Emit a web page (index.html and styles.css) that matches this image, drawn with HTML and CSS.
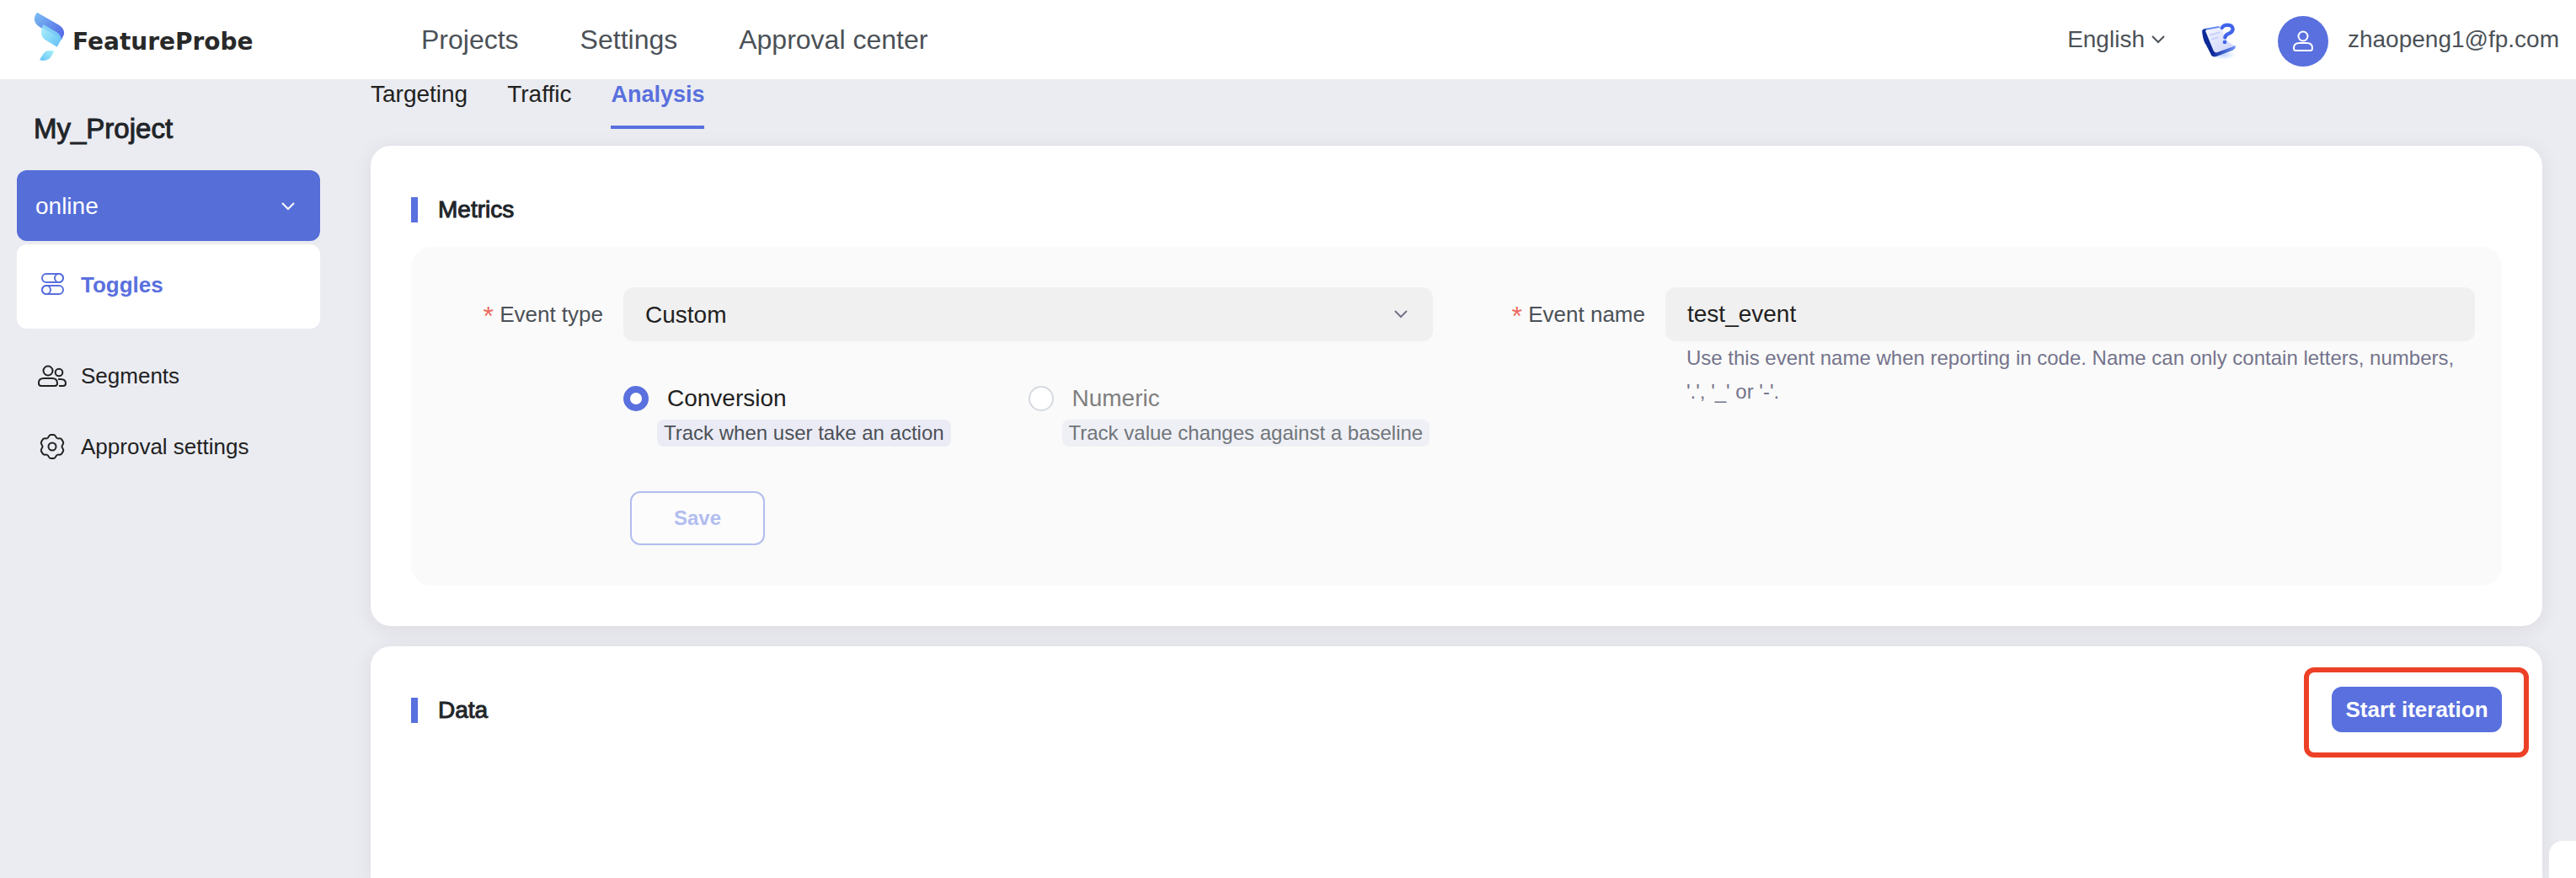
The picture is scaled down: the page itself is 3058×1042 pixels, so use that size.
FILE: index.html
```html
<!DOCTYPE html>
<html lang="en">
<head>
<meta charset="utf-8">
<meta name="viewport" content="width=device-width, initial-scale=1">
<title>FeatureProbe</title>
<link rel="stylesheet" href="styles.css">
</head>
<body>
<header class="header">
  <a class="brand" href="#">
    <svg class="brand-mark" viewBox="120 40 112 178" aria-hidden="true">
      <defs>
        <linearGradient id="g1" x1="0" y1="0" x2="1" y2="1"><stop offset="0" stop-color="#7cc0f3"/><stop offset="1" stop-color="#4f5fe4"/></linearGradient>
        <linearGradient id="g2" x1="0" y1="0" x2="1" y2="1"><stop offset="0" stop-color="#b0f3fa"/><stop offset="1" stop-color="#62bdf8"/></linearGradient>
        <linearGradient id="g3" x1="1" y1="0" x2="0" y2="1"><stop offset="0" stop-color="#a8f2f8"/><stop offset="1" stop-color="#68c3f9"/></linearGradient>
      </defs>
      <path fill="url(#g1)" d="M132 42 210 87Q234 103 228 122L220 140 142 95Q114 76 126 52Z"/>
      <path fill="url(#g2)" d="M155 86 204 114Q218 124 220 137L204 166 164 142Q147 132 147 112 147 97 155 86Z"/>
      <path fill="#6cb8f4" opacity=".45" d="M150 97 206 128Q215 134 218 140L220 136Q217 124 204 114L155 86Z"/>
      <path fill="url(#g3)" d="M194 181Q176 176 163 182 155 188 141 212 152 217 164 214 174 212 181 203Z"/>
    </svg>
    <span class="brand-name">FeatureProbe</span>
  </a>
  <nav class="nav">
    <a href="#">Projects</a>
    <a href="#">Settings</a>
    <a href="#">Approval center</a>
  </nav>
  <div class="tools">
    <button class="language" type="button">English
      <svg class="chevron" viewBox="0 0 16 10" aria-hidden="true"><path d="M1 1l7 7 7-7"/></svg>
    </button>
    <a class="docs" href="#" aria-label="Documentation">
      <svg viewBox="30 30 132 138" aria-hidden="true">
        <defs>
          <linearGradient id="d1" x1="0" y1="0" x2="1" y2="1"><stop offset="0" stop-color="#f4f6ff"/><stop offset="1" stop-color="#c9d2fb"/></linearGradient>
          <linearGradient id="d2" x1="0" y1="0" x2="1" y2="0"><stop offset="0" stop-color="#0d2a9a"/><stop offset="1" stop-color="#6f92f8"/></linearGradient>
          <radialGradient id="d3"><stop offset="0" stop-color="#bcd4ff"/><stop offset="1" stop-color="#bcd4ff" stop-opacity="0"/></radialGradient>
        </defs>
        <ellipse cx="112" cy="150" rx="48" ry="17" fill="url(#d3)"/>
        <path fill="#5d82f2" d="M38 66Q40 58 52 56L100 48 104 58 58 70 62 110 50 112Z"/>
        <path fill="#0e2a96" d="M42 60 54 58 88 144 84 157Q76 157 72 151L46 100Q38 76 42 60Z"/>
        <path fill="url(#d2)" d="M84 142 158 117Q160 128 148 134L92 155Q80 159 74 153Z"/>
        <path fill="url(#d1)" d="M52 62 108 52Q112 52 112 60 118 88 132 102T158 118L92 142Q84 144 80 136L54 72Q50 64 52 62Z"/>
        <path fill="none" stroke="#c9d3fb" stroke-width="6" d="M66 80 104 70M72 95 97 88"/>
        <path fill="none" stroke="#4164ea" stroke-width="13" stroke-linecap="round" d="M110 54Q116 44 130 44 148 45 149 58 149 68 138 73 124 78 121 88"/>
        <circle cx="120" cy="105" r="7" fill="#4164ea"/>
      </svg>
    </a>
    <a class="account" href="#">
      <span class="avatar">
        <svg viewBox="0 0 26 26" aria-hidden="true"><circle cx="13" cy="7" r="5.500"/><path d="M2 21Q2 15 9 15H17Q24 15 24 21 24 24 22 24H4Q2 24 2 21Z"/></svg>
      </span>
      zhaopeng1@fp.com
    </a>
  </div>
</header>

<div class="layout">
  <aside class="sidebar">
    <h1 class="project">My_Project</h1>
    <button class="environment" type="button">online
      <svg class="chevron" viewBox="0 0 16 10" aria-hidden="true"><path d="M1 1l7 7 7-7"/></svg>
    </button>
    <nav class="menu">
      <a class="menu-item menu-item-active" href="#">
        <svg viewBox="-18 -18 36 36" aria-hidden="true"><rect x="-12" y="-13" width="25" height="10" rx="5"/><rect x="3" y="-13" width="10" height="10" rx="5"/><rect x="-12" y="1" width="25" height="10" rx="5"/><rect x="-12" y="1" width="10" height="10" rx="5"/></svg>
        Toggles
      </a>
      <a class="menu-item" href="#">
        <svg viewBox="-18 -18 36 36" aria-hidden="true"><circle cx="-5" cy="-6" r="5.500"/><path d="M-16 8Q-16 3-10 3H0Q6 3 6 9 6 12 3 12H-13Q-16 12-16 9Z"/><circle cx="8" cy="-4" r="4.300"/><path d="M7 4H10Q16 4 16 9 16 12 13 12H8"/></svg>
        Segments
      </a>
      <a class="menu-item" href="#">
        <svg viewBox="-18 -18 36 36" aria-hidden="true">
          <defs><path id="tooth" d="M-5.750-9.960C-4-11-4.200-14-1.800-14H1.800C4.200-14 4-11 5.750-9.960"/></defs>
          <use href="#tooth"/><use href="#tooth" transform="rotate(60)"/><use href="#tooth" transform="rotate(120)"/><use href="#tooth" transform="rotate(180)"/><use href="#tooth" transform="rotate(240)"/><use href="#tooth" transform="rotate(300)"/>
          <circle r="4.500"/>
        </svg>
        Approval settings
      </a>
    </nav>
  </aside>

  <main class="main">
    <nav class="tabs">
      <a class="tab" href="#">Targeting</a>
      <a class="tab" href="#">Traffic</a>
      <a class="tab tab-active" href="#">Analysis</a>
    </nav>

    <section class="card">
      <h2 class="card-title">Metrics</h2>
      <form class="metrics">
        <label class="field-label" for="event-type"><span class="required">*</span> Event type</label>
        <div class="select">
          <select id="event-type"><option>Custom</option></select>
          <svg class="chevron" viewBox="0 0 16 10" aria-hidden="true"><path d="M1 1l7 7 7-7"/></svg>
        </div>
        <label class="field-label" for="event-name"><span class="required">*</span> Event name</label>
        <div class="name-field">
          <input class="text-input" id="event-name" type="text" value="test_event">
          <p class="hint">Use this event name when reporting in code. Name can only contain letters, numbers, '.', '_' or '-'.</p>
        </div>
        <div class="options">
          <label class="option">
            <input type="radio" name="kind" checked>
            <span class="option-name">Conversion</span>
            <span class="option-note">Track when user take an action</span>
          </label>
          <label class="option option-muted">
            <input type="radio" name="kind" disabled>
            <span class="option-name">Numeric</span>
            <span class="option-note">Track value changes against a baseline</span>
          </label>
        </div>
        <button class="save" type="button" disabled>Save</button>
      </form>
    </section>

    <section class="card card-data">
      <h2 class="card-title">Data</h2>
      <div class="highlight"><button class="start" type="button">Start iteration</button></div>
    </section>
  </main>
</div>
<div class="corner-widget"></div>
</body>
</html>
```

FILE: styles.css
```css
* { box-sizing: border-box; }

body {
  margin: 0;
  height: 100vh;
  overflow: hidden;
  display: flex;
  flex-direction: column;
  background: #ebecf1;
  color: #212529;
  font-family: "Liberation Sans", Arial, sans-serif;
  font-size: 28px;
}

a { color: inherit; text-decoration: none; }
button, input, select { font: inherit; color: inherit; margin: 0; }
button { border: 0; background: none; padding: 0; }
svg { display: block; fill: none; }

.chevron { width: 16px; height: 10px; stroke: currentColor; stroke-width: 2; flex: none; }

/* Header */
.header {
  display: flex;
  align-items: center;
  height: 94px;
  flex: none;
  padding: 0 20px 0 40px;
  background: #fff;
  color: #4b5157;
}
.brand { display: flex; align-items: center; gap: 9px; width: 460px; }
.brand-mark { width: 37px; height: 59px; margin-bottom: 8px; }
.brand-name { font: 700 28px/40px "DejaVu Sans", sans-serif; color: #292929; padding-top: 6px; }
.nav { display: flex; gap: 73px; font-size: 32px; }
.tools { display: flex; align-items: center; margin-left: auto; }
.language { display: flex; align-items: center; gap: 8px; }
.docs { margin: 2px 49px 0 41px; }
.docs svg { width: 44px; height: 46px; }
.account { display: flex; align-items: center; gap: 23px; }
.avatar {
  display: grid;
  place-items: center;
  width: 60px;
  height: 60px;
  margin-top: 4px;
  border-radius: 50%;
  background: #5970de;
}
.avatar svg { width: 26px; height: 26px; stroke: #fff; stroke-width: 2; }

/* Sidebar */
.layout { display: flex; flex: 1; min-height: 0; }
.sidebar { width: 400px; flex: none; padding: 39px 20px 0; }
.project {
  margin: 0 20px 29px;
  font-size: 33px;
  font-weight: 400;
  line-height: 40px;
  -webkit-text-stroke: 1px currentColor;
}
.environment {
  display: flex;
  align-items: center;
  justify-content: space-between;
  width: 100%;
  height: 84px;
  padding: 2px 30px 0 22px;
  border-radius: 12px;
  background: #556ed8;
  color: #fff;
}
.menu { font-size: 26px; color: #212121; }
.menu-item { display: flex; align-items: center; gap: 16px; height: 84px; padding-left: 24px; }
.menu-item svg { width: 36px; height: 36px; stroke: currentColor; stroke-width: 2; }
.menu-item-active {
  height: 100px;
  margin: 4px 0 14px;
  padding-bottom: 4px;
  border-radius: 12px;
  background: #fff;
  color: #5970de;
  font-weight: 700;
}

/* Main */
.main { display: flex; flex-direction: column; flex: 1; min-width: 0; padding: 2px 40px 0; }
.tabs { display: flex; gap: 47px; margin-bottom: 20px; line-height: 32px; color: #212121; }
.tab { padding-bottom: 21px; border-bottom: 4px solid transparent; }
.tab-active { color: #5970de; border-color: #5970de; font-size: 27px; font-weight: 700; }

.card {
  padding: 48px;
  border-radius: 24px;
  background: #fff;
  box-shadow: 0 4px 24px rgba(33, 20, 50, .08);
}
.card-title {
  display: flex;
  align-items: center;
  gap: 24px;
  height: 56px;
  margin: 0 0 16px;
  font-size: 28px;
  font-weight: 400;
  -webkit-text-stroke: 1px currentColor;
}
.card-title::before { content: ""; width: 8px; height: 30px; background: #5970de; }

.metrics {
  display: grid;
  grid-template-columns: 252px 1fr 276px 1fr;
  padding: 48px 32px 48px 0;
  border-radius: 24px;
  background: #fafafa;
}
.field-label { padding-right: 24px; text-align: right; font-size: 26px; line-height: 64px; color: #4b5157; }
.required { color: #ec6a5e; font-size: 32px; line-height: 32px; vertical-align: -4px; }
.select { display: grid; align-items: center; height: 64px; }
.select > * { grid-area: 1 / 1; }
.select select, .text-input {
  appearance: none;
  width: 100%;
  height: 64px;
  padding: 0 26px;
  border: 0;
  border-radius: 12px;
  background: #f0f0f0;
  color: #212121;
}
.select .chevron { justify-self: end; margin-right: 30px; color: #74748c; pointer-events: none; }
.name-field { grid-row: 1 / 3; grid-column: 4; }
.hint { margin: 0; padding: 0 16px 0 25px; font-size: 24px; line-height: 40px; color: #74748c; }

.options { grid-column: 2; display: grid; grid-template-columns: 1fr 1fr; margin-top: 48px; }
.option {
  display: grid;
  grid-template-columns: 30px 1fr;
  grid-template-rows: 40px 32px;
  gap: 5px 10px;
  align-items: center;
  justify-items: start;
}
.option input {
  appearance: none;
  width: 30px;
  height: 30px;
  border: 2px solid #d5dadf;
  border-radius: 50%;
  background: #fff;
}
.option input:checked { border: 8px solid #5970de; }
.option-name { padding-left: 12px; color: #212121; }
.option-note {
  grid-column: 2;
  padding: 0 8px;
  border-radius: 8px;
  background: #ebebf5;
  color: #4b5157;
  font-size: 24px;
  line-height: 32px;
  white-space: nowrap;
}
.option-muted .option-name { color: #7f7f7f; }
.option-muted .option-note { background: #eff0f5; color: #70757a; }
.save {
  grid-column: 2;
  width: 160px;
  height: 64px;
  margin: 53px 0 0 8px;
  border: 2px solid #b2bdef;
  border-radius: 12px;
  background: #fcfcfc;
  color: #b2bdef;
  font-size: 24px;
  font-weight: 700;
}

.card-data {
  display: flex;
  align-items: flex-start;
  justify-content: space-between;
  flex: 1;
  margin-top: 24px;
  padding: 25px 16px 0 48px;
  border-radius: 24px 24px 0 0;
}
.card-data .card-title { margin-top: 23px; }
.highlight { padding: 17px 26px 24px 27px; border: 6px solid #ec4127; border-radius: 12px; }
.start {
  display: block;
  width: 202px;
  height: 54px;
  border-radius: 12px;
  background: #5970de;
  color: #fff;
  font-size: 26px;
  font-weight: 700;
}

.corner-widget {
  position: fixed;
  right: 0;
  bottom: 0;
  width: 32px;
  height: 44px;
  border-radius: 16px 0 0 0;
  background: #fff;
}
```
